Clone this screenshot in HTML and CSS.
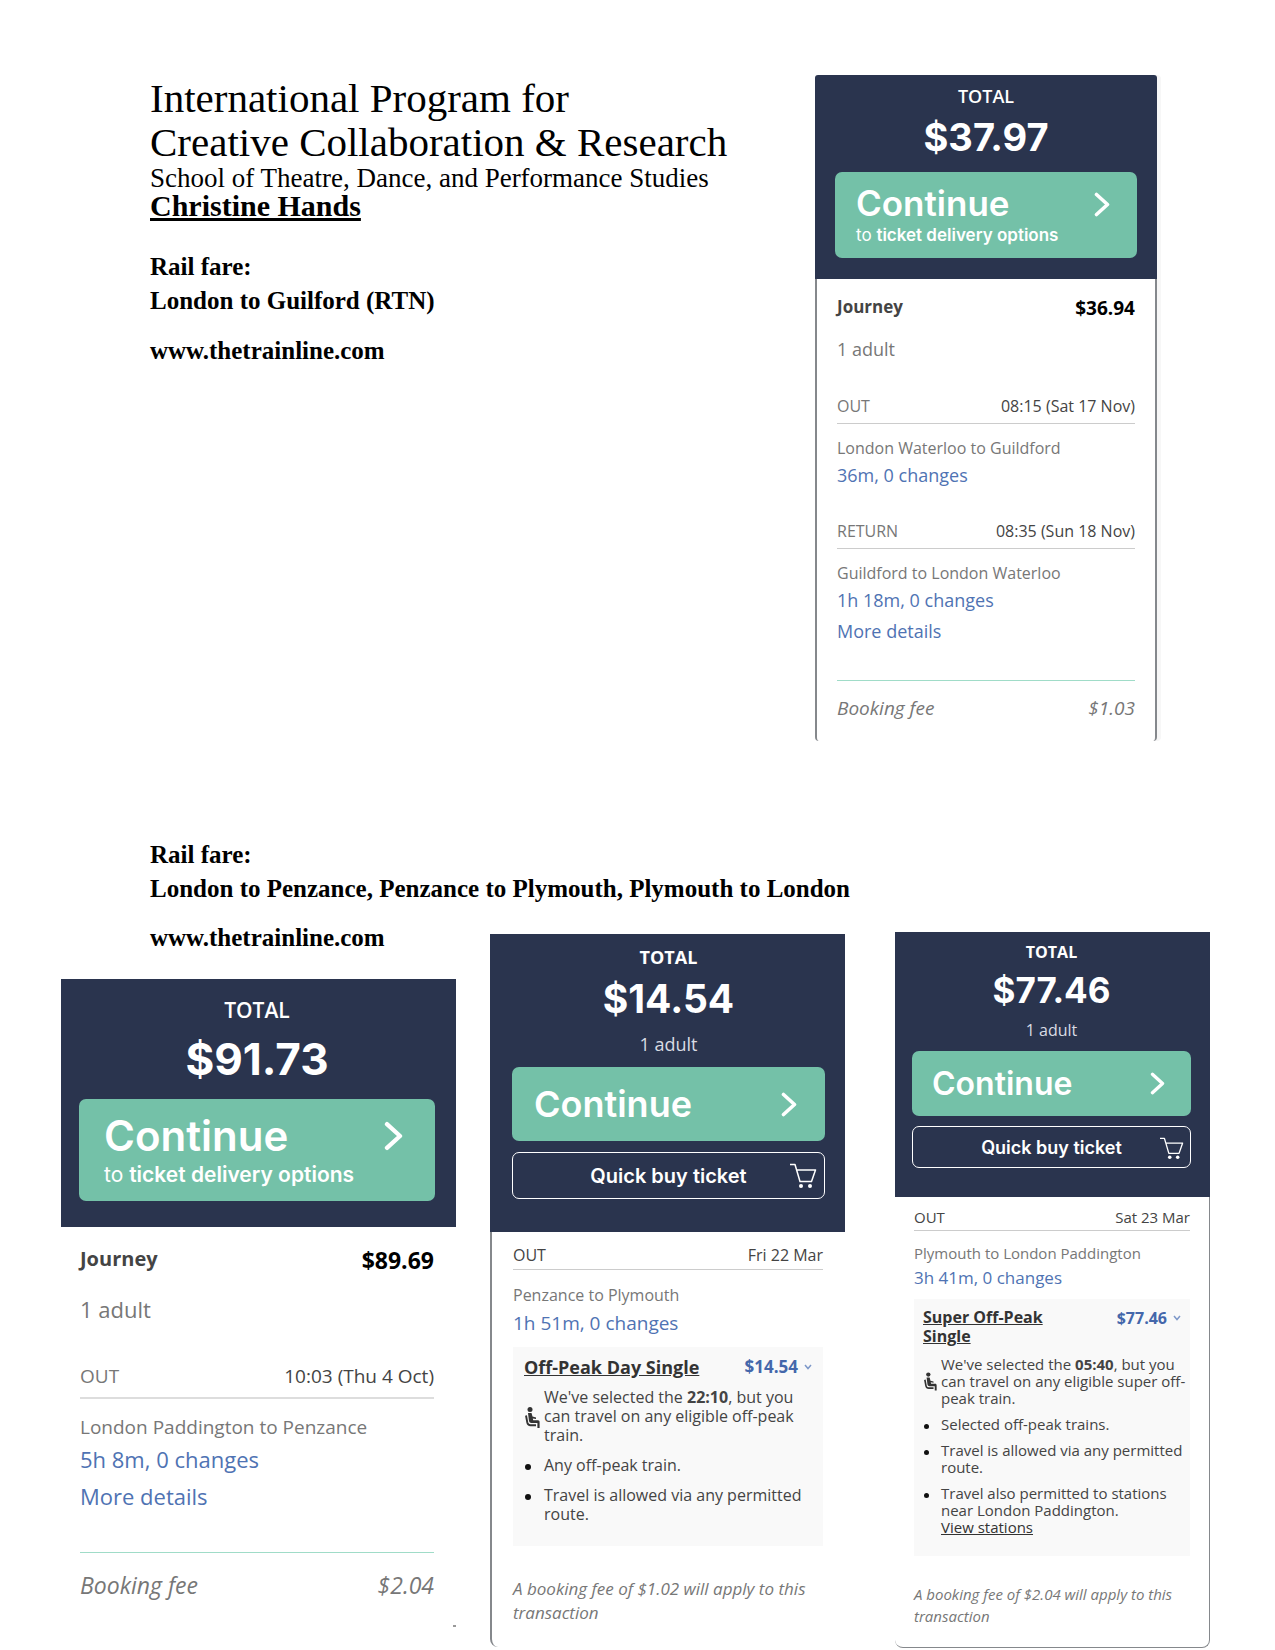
FILE: index.html
```html
<!DOCTYPE html>
<html lang="en">
<head>
    <meta charset="UTF-8">
    <meta name="viewport" content="width=device-width, initial-scale=1.0">
    <title>Rail fares - Christine Hands</title>
    <link rel="stylesheet" href="styles.css">
</head>
<body>

<!-- shared icons -->
<svg class="sprite" aria-hidden="true">
    <symbol id="chevron" viewBox="0 0 16 25">
        <path d="M2.500 2.500L13.500 12.500L2.500 22.500" fill="none" stroke="#fff" stroke-width="3.600" stroke-linecap="round" stroke-linejoin="round"/>
    </symbol>
    <symbol id="cart" viewBox="0 0 28 26">
        <path d="M1 1.500H6L11 18.500H22.500L26.500 7H8" fill="none" stroke="#fff" stroke-width="1.500" stroke-linejoin="round"/>
        <circle cx="12" cy="23" r="2" fill="#fff"/>
        <circle cx="21" cy="23" r="2" fill="#fff"/>
    </symbol>
    <symbol id="seat" viewBox="0 0 15 21">
        <circle cx="5" cy="2.500" r="2.500" fill="#333"/>
        <path d="M3 6H6.500L7.500 9.500L11 10.500V12L7.800 11.500L8.200 13.200H13C14 13.200 14.600 14 14.600 15V21H12.400V16H6.500C5 16 4.300 15.300 4 14Z" fill="#333"/>
        <path d="M1 8.500L2.300 15.500C2.700 17.400 3.600 18.200 5.500 18.200H11" fill="none" stroke="#333" stroke-width="1.900"/>
    </symbol>
    <symbol id="down" viewBox="0 0 8 6">
        <path d="M1 1L4 4.500L7 1" fill="none" stroke="#7d98c9" stroke-width="1.500"/>
    </symbol>
</svg>

<div class="top">
    <header class="intro">
        <h1>International Program for<br>Creative Collaboration &amp; Research</h1>
        <p class="school">School of Theatre, Dance, and Performance Studies</p>
        <p class="name">Christine Hands</p>

        <h2>Rail fare:<br>London to Guilford (RTN)</h2>
        <a class="site" href="#">www.thetrainline.com</a>
    </header>

    <section class="card outlined">
        <div class="card-head">
            <p class="total">TOTAL</p>
            <p class="price">$37.97</p>
            <button class="continue">
                <span>Continue<small>to <b>ticket delivery options</b></small></span>
                <svg class="chevron"><use href="#chevron"/></svg>
            </button>
        </div>
        <div class="card-body">
            <div class="journey"><h3>Journey</h3><strong>$36.94</strong></div>
            <p class="adult">1 adult</p>
            <div class="leg">
                <div class="leg-head"><span class="muted">OUT</span><span>08:15 (Sat 17 Nov)</span></div>
                <p class="route">London Waterloo to Guildford</p>
                <a class="link" href="#">36m, 0 changes</a>
            </div>
            <div class="leg">
                <div class="leg-head"><span class="muted">RETURN</span><span>08:35 (Sun 18 Nov)</span></div>
                <p class="route">Guildford to London Waterloo</p>
                <a class="link" href="#">1h 18m, 0 changes</a>
                <a class="link" href="#">More details</a>
            </div>
            <div class="fee"><span>Booking fee</span><span>$1.03</span></div>
        </div>
    </section>
</div>

<h2 class="second">Rail fare:<br>London to Penzance, Penzance to Plymouth, Plymouth to London</h2>

<div class="fares">
    <div class="first-fare">
        <a class="site" href="#">www.thetrainline.com</a>
        <section class="card large">
            <div class="card-head">
                <p class="total">TOTAL</p>
                <p class="price">$91.73</p>
                <button class="continue">
                    <span>Continue<small>to <b>ticket delivery options</b></small></span>
                    <svg class="chevron"><use href="#chevron"/></svg>
                </button>
            </div>
            <div class="card-body">
                <div class="journey"><h3>Journey</h3><strong>$89.69</strong></div>
                <p class="adult">1 adult</p>
                <div class="leg">
                    <div class="leg-head"><span class="muted">OUT</span><span>10:03 (Thu 4 Oct)</span></div>
                    <p class="route">London Paddington to Penzance</p>
                    <a class="link" href="#">5h 8m, 0 changes</a>
                    <a class="link" href="#">More details</a>
                </div>
                <div class="fee"><span>Booking fee</span><span>$2.04</span></div>
            </div>
        </section>
    </div>

    <section class="card quick-card left-line">
        <div class="card-head">
            <p class="total">TOTAL</p>
            <p class="price">$14.54</p>
            <p class="passengers">1 adult</p>
            <button class="continue">
                <span>Continue</span>
                <svg class="chevron"><use href="#chevron"/></svg>
            </button>
            <button class="quick">Quick buy ticket<svg class="cart"><use href="#cart"/></svg></button>
        </div>
        <div class="card-body">
            <div class="leg-head"><span>OUT</span><span>Fri 22 Mar</span></div>
            <p class="route">Penzance to Plymouth</p>
            <a class="link" href="#">1h 51m, 0 changes</a>
            <div class="ticket">
                <div class="ticket-head">
                    <a href="#">Off-Peak Day Single</a>
                    <button class="ticket-price">$14.54<svg><use href="#down"/></svg></button>
                </div>
                <ul>
                    <li class="seat"><svg><use href="#seat"/></svg>We've selected the <b>22:10</b>, but you can travel on any eligible off-peak train.</li>
                    <li>Any off-peak train.</li>
                    <li>Travel is allowed via any permitted route.</li>
                </ul>
            </div>
            <p class="note">A booking fee of $1.02 will apply to this transaction</p>
        </div>
    </section>

    <section class="card quick-card small right-line">
        <div class="card-head">
            <p class="total">TOTAL</p>
            <p class="price">$77.46</p>
            <p class="passengers">1 adult</p>
            <button class="continue">
                <span>Continue</span>
                <svg class="chevron"><use href="#chevron"/></svg>
            </button>
            <button class="quick">Quick buy ticket<svg class="cart"><use href="#cart"/></svg></button>
        </div>
        <div class="card-body">
            <div class="leg-head"><span>OUT</span><span>Sat 23 Mar</span></div>
            <p class="route">Plymouth to London Paddington</p>
            <a class="link" href="#">3h 41m, 0 changes</a>
            <div class="ticket">
                <div class="ticket-head">
                    <a href="#">Super Off-Peak<br>Single</a>
                    <button class="ticket-price">$77.46<svg><use href="#down"/></svg></button>
                </div>
                <ul>
                    <li class="seat"><svg><use href="#seat"/></svg>We've selected the <b>05:40</b>, but you can travel on any eligible super off-peak train.</li>
                    <li>Selected off-peak trains.</li>
                    <li>Travel is allowed via any permitted route.</li>
                    <li>Travel also permitted to stations near London Paddington.<br><a href="#">View stations</a></li>
                </ul>
            </div>
            <p class="note">A booking fee of $2.04 will apply to this transaction</p>
        </div>
    </section>
</div>

</body>
</html>
```
FILE: styles.css
```css
* {
    box-sizing: border-box;
}

body {
    margin: 0;
    background-color: #fff;
    color: #000;
    font-family: "Liberation Serif", "Times New Roman", serif;
}

h1, h2, h3, p, ul {
    margin: 0;
    padding: 0;
}

button {
    font-family: inherit;
    cursor: pointer;
}

.sprite {
    display: none;
}

/* document text */
.top {
    display: grid;
    grid-template-columns: 665fr 342fr;
    align-items: start;
    padding: 75px 118px 0 150px;
}

.intro {
    padding-top: 1px;
}

h1 {
    font-size: 41px;
    font-weight: normal;
    line-height: 44px;
}

.school {
    font-size: 27px;
    line-height: 28px;
}

.name {
    font-size: 30px;
    font-weight: bold;
    line-height: 28px;
    text-decoration: underline;
}

h2, .site {
    font-size: 25px;
    font-weight: bold;
    line-height: 34px;
}

.intro h2 {
    margin-top: 30px;
}

.site {
    display: block;
    color: #000;
    text-decoration: none;
}

.intro .site {
    margin-top: 16px;
}

.second {
    margin-top: 97px;
    padding-left: 150px;
}

.fares {
    display: grid;
    grid-template-columns: 395fr 355fr 331fr;
    column-gap: 34px;
    align-items: start;
    padding: 15px 65px 0 61px;
}

.first-fare .site {
    margin-bottom: 24px;
    padding-left: 89px;
}

/* fare cards */
.card {
    --total: 18px;
    --price: 38px;
    --continue: 35px;
    --sub: 17px;
    --text: 18px;
    --meta: 16px;
    --fee: 19px;
    --row: 24px;
    --line: 31px;
    font-family: "Open Sans", sans-serif;
    color: #444;
}

.card-head {
    padding: 9px 20px 21px;
    background-color: #2a344e;
    color: #fff;
    text-align: center;
}

.total {
    font-size: var(--total);
    font-weight: 600;
    line-height: 24px;
}

.price {
    margin: 6px 0 12px;
    font-family: Inter, sans-serif;
    font-size: var(--price);
    font-weight: 700;
    line-height: 46px;
}

.passengers {
    font-size: var(--text);
    line-height: 26px;
    color: #d9dce4;
}

.continue {
    display: flex;
    justify-content: space-between;
    align-items: flex-start;
    width: 100%;
    padding: 11px 27px 11px 21px;
    border: none;
    border-radius: 7px;
    background-color: #74c1a8;
    color: #fff;
    font-family: Inter, sans-serif;
    font-size: var(--continue);
    font-weight: 600;
    line-height: 40px;
    text-align: left;
}

.continue small {
    display: block;
    font-size: var(--sub);
    font-weight: 400;
    line-height: 24px;
}

.continue b {
    font-weight: 600;
}

.chevron {
    width: 16px;
    height: 25px;
    margin-top: 9px;
}

.card-body {
    padding: 13px 22px 20px;
}

.outlined {
    border-radius: 4px;
    box-shadow: 4px 0 0 #f7f7f7;
}

.outlined .card-head {
    border-radius: 3px 3px 0 0;
}

.outlined .card-body {
    padding: 14px 20px 20px;
    border: 2px solid #85888c;
    border-width: 0 2px;
    border-radius: 0 0 4px 4px;
}

.journey, .leg-head, .fee, .ticket-head {
    display: flex;
    justify-content: space-between;
    align-items: flex-start;
}

.journey {
    font-size: 19px;
    line-height: 30px;
}

.journey h3 {
    font-size: 17px;
    line-height: 27px;
}

.journey strong {
    color: #000;
}

.adult {
    margin: 13px 0 4px;
    font-size: var(--text);
    line-height: 26px;
    color: #777;
}

.leg {
    padding-top: 28px;
}

.leg-head {
    padding-bottom: 5px;
    border-bottom: 1px solid #ccc;
    font-size: var(--meta);
    line-height: var(--row);
}

.muted {
    color: #777;
}

.route {
    margin-top: 12px;
    font-size: var(--meta);
    line-height: var(--row);
    color: #777;
}

.link {
    display: block;
    color: #4f73b3;
    font-size: var(--text);
    line-height: var(--line);
    text-decoration: none;
}

.fee {
    margin-top: 33px;
    padding-top: 14px;
    border-top: 1px solid #a0dcc8;
    font-size: var(--fee);
    font-style: italic;
    line-height: 26px;
    color: #777;
}

/* large card */
.large {
    --total: 21px;
    --price: 44px;
    --continue: 42px;
    --sub: 21px;
    --text: 22px;
    --meta: 19px;
    --fee: 23px;
    --row: 28px;
    --line: 37px;
}

.large .card-head {
    padding: 17px 21px 26px 18px;
}

.large .total {
    line-height: 28px;
}

.large .price {
    margin: 8px 0 13px;
    line-height: 54px;
}

.large .continue {
    padding: 13px 32px 11px 25px;
    line-height: 48px;
}

.large .continue small {
    line-height: 30px;
}

.large .chevron {
    width: 19px;
    height: 30px;
}

.large .card-body {
    padding: 16px 22px 25px 19px;
}

/* what is left of the rounded corner */
.large .card-body::after {
    content: "";
    display: block;
    width: 3px;
    height: 2px;
    margin: 25px -22px 0 auto;
    background-color: #999;
}

.large .journey {
    font-size: 23px;
    line-height: 34px;
}

.large .journey h3 {
    font-size: 20px;
    line-height: 32px;
}

.large .adult {
    margin: 17px 0 10px;
    line-height: 30px;
}

.large .leg-head {
    padding-bottom: 7px;
    border-bottom: 2px solid #ddd;
}

.large .route {
    margin-top: 14px;
}

.large .fee {
    margin-top: 37px;
    padding-top: 17px;
    line-height: 30px;
}

/* cards with the quick buy button */
.quick-card {
    --price: 39px;
    --continue: 36px;
    --quick: 20px;
    --text: 19px;
    --meta: 16px;
    --small: 16px;
    --note: 17px;
    --line: 32px;
    --ticket-line: 19px;
    margin-top: 13px;
}

.quick-card .card-head {
    padding: 11px 20px 33px 22px;
}

.quick-card .total {
    font-weight: 700;
}

.quick-card .price {
    margin: 7px 0 9px;
}

.quick-card .passengers {
    font-size: 18px;
}

.quick-card .continue {
    margin-top: 10px;
    padding: 17px 28px 17px 22px;
}

.quick-card .chevron {
    margin-top: 8px;
}

.quick {
    position: relative;
    display: block;
    width: 100%;
    height: 47px;
    margin-top: 11px;
    padding: 0;
    border: 1px solid #fff;
    border-radius: 7px;
    background: none;
    color: #fff;
    font-family: Inter, sans-serif;
    font-size: var(--quick);
    font-weight: 600;
    text-align: center;
}

.cart {
    position: absolute;
    top: 10px;
    right: 7px;
    width: 28px;
    height: 26px;
}

.quick-card .card-body {
    padding: 11px 22px 22px 21px;
    border: 0 solid #85888c;
}

.left-line .card-body {
    border-left-width: 2px;
    border-bottom-left-radius: 8px;
}

.right-line .card-body {
    border-right-width: 1px;
    border-bottom-width: 1px;
    border-radius: 0 0 8px 8px;
}

.quick-card .leg-head {
    padding-bottom: 2px;
}

.quick-card .route {
    margin-top: 13px;
}

.ticket {
    margin-top: 8px;
    padding: 10px 11px 22px;
    background-color: #f9f9f9;
}

.ticket-head {
    font-size: 18px;
    font-weight: 700;
    line-height: 20px;
}

.ticket a {
    color: #333;
}

.ticket-price {
    padding: 0;
    border: none;
    background: none;
    color: #4467ab;
    font-size: 17px;
    font-weight: 700;
    line-height: 20px;
}

.ticket-price svg {
    width: 8px;
    height: 6px;
    margin-left: 6px;
    vertical-align: 3px;
}

.ticket ul {
    display: grid;
    gap: 11px;
    margin-top: 11px;
    padding-left: 20px;
    font-size: var(--small);
    line-height: var(--ticket-line);
    list-style: none;
}

.ticket li {
    position: relative;
}

.ticket li::before {
    content: "";
    position: absolute;
    top: 8px;
    left: -19px;
    width: 6px;
    height: 6px;
    border-radius: 50%;
    background-color: #111;
}

.ticket .seat::before {
    display: none;
}

.seat svg {
    position: absolute;
    top: 19px;
    left: -19px;
    width: 15px;
    height: 21px;
}

.note {
    margin-top: 31px;
    color: #777;
    font-size: var(--note);
    font-style: italic;
    line-height: var(--row);
}

/* small card */
.small {
    --total: 16px;
    --price: 35px;
    --continue: 32px;
    --quick: 18px;
    --text: 17px;
    --meta: 15px;
    --small: 15px;
    --note: 15px;
    --row: 22px;
    --line: 28px;
    --ticket-line: 17px;
    margin-top: 11px;
    margin-left: 16px;
}

.small .card-head {
    padding: 9px 19px 29px 17px;
}

.small .total {
    line-height: 22px;
}

.small .price {
    margin: 6px 0 7px;
    line-height: 42px;
}

.small .passengers {
    font-size: 16px;
    line-height: 24px;
}

.small .continue {
    margin-top: 9px;
    padding: 14px 26px 14px 20px;
    line-height: 37px;
}

.small .chevron {
    width: 15px;
    height: 23px;
    margin-top: 7px;
}

.small .quick {
    height: 42px;
    margin-top: 10px;
}

.small .cart {
    right: 6px;
    width: 25px;
    height: 23px;
}

.small .card-body {
    padding: 9px 19px 20px 19px;
}

.small .route {
    margin-top: 11px;
}

.small .ticket {
    margin-top: 7px;
    padding: 9px 3px 20px 9px;
}

.small .ticket-head {
    padding-right: 6px;
    font-size: 16px;
    line-height: 19px;
}

.small .ticket-price {
    font-size: 16px;
}

.small .ticket ul {
    gap: 9px;
    margin-top: 10px;
    padding-left: 18px;
}

.small .ticket li::before {
    left: -17px;
    width: 5px;
    height: 5px;
}

.small .seat svg {
    top: 16px;
    left: -17px;
    width: 13px;
    height: 19px;
}

.small .note {
    margin-top: 27px;
}
```
